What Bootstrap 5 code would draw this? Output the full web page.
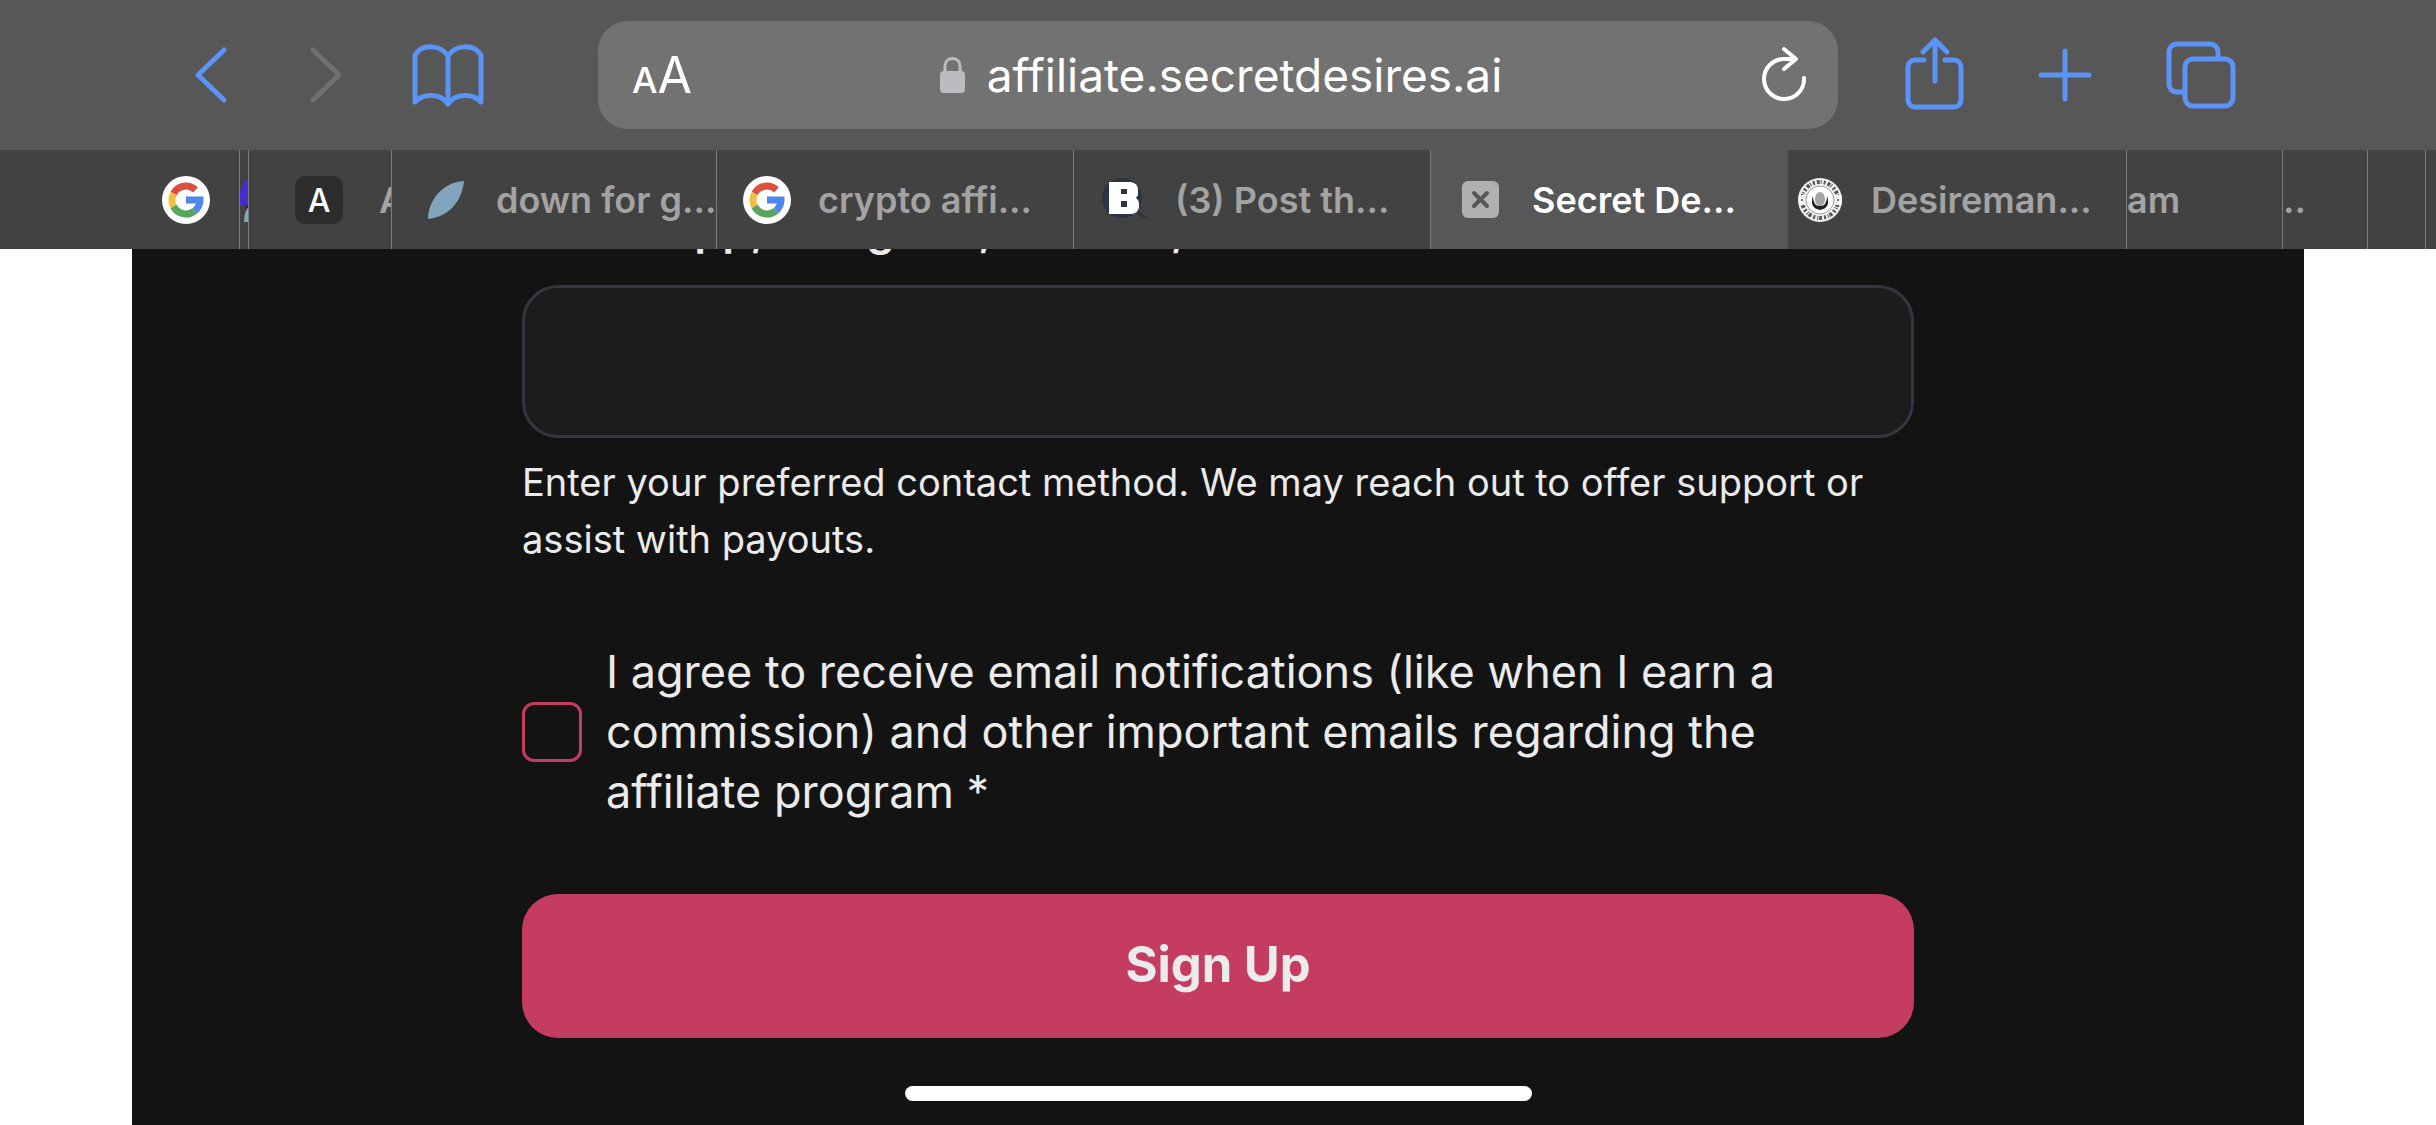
<!DOCTYPE html>
<html lang="en">
<head>
<meta charset="utf-8">
<meta name="viewport" content="width=device-width, initial-scale=1">
<title>Secret Desires Affiliate</title>
<link href="https://cdn.jsdelivr.net/npm/bootstrap@5.3.0/dist/css/bootstrap.min.css" rel="stylesheet">
<style>
  body { font-family: Inter, "Liberation Sans", sans-serif; background: #fff; color: #ebebeb; overflow: hidden; }
  .screen { min-height: 100vh; }
  .toolbar { background: #575757; height: 150px; padding: 0 200px 0 186px; }
  .tools-left { gap: 62px; }
  .tools-right { gap: 72px; }
  .tool { color: #5b93f7; border: 0; background: none; padding: 0; flex: none; }
  .tool svg, .fav { display: block; flex: none; }
  .tool.off { color: #707070; }
  .line-art { fill: none; stroke: currentColor; stroke-width: 5; stroke-linecap: round; stroke-linejoin: round; }
  .line-art.thin { stroke-width: 4; }
  .address { background: #727272; border-radius: 30px; height: 108px; margin: 0 66px 0 112px; padding: 0 30px 0 34px; min-width: 0; }
  .address .tool { color: #fff; }
  .address .place { gap: 22px; padding-right: 10px; }
  .url { font-size: 46px; line-height: 60px; color: #fff; }
  .aa { font-size: 50px; line-height: 60px; padding-top: 4px; }
  .aa .aa-small { font-size: 36px; font-weight: 500; }
  .tabs { background: #424242; height: 99px; }
  .tab { flex: 1 1 357px; border-right: 1px solid #7d7d7d; color: #a3a3a3; font-size: 36px; line-height: 44px; font-weight: 600; overflow: hidden; white-space: nowrap; text-decoration: none; gap: 27px; min-width: 0; padding-left: 26px; }
  .tab-first { flex-basis: 240px; justify-content: flex-end; padding: 0 29px 0 0; }
  .tab-sliver { flex-basis: 9px; padding: 0; }
  .tab-letter { flex-basis: 143px; padding-left: 46px; gap: 36px; }
  .tab-down { flex-basis: 325px; padding-left: 29px; }
  .tab-active { background: #575757; color: #fff; border: 0; padding-left: 31px; gap: 33px; }
  .tab-desire { flex-basis: 339px; padding-left: 9px; }
  .tab-am { flex-basis: 156px; padding: 0; }
  .tab-dots { flex-basis: 85px; padding: 0; }
  .tab-empty { flex-basis: 58px; padding: 0; }
  .tab-last { flex-basis: 10px; padding: 0; border: 0; }
  .page { background: #131313; margin: 0 132px; padding: 0 390px; overflow: hidden; }
  .field-name { font-size: 45px; line-height: 60px; font-weight: 600; margin: -50px 0 26px; }
  .page .form-control { height: 153px; border: 3px solid #333642; border-radius: 36px; background: #1c1c1c; color: #ebebeb; }
  .hint { font-size: 38px; line-height: 57px; color: #ebebeb; margin: 16px 0 0; }
  .agree { margin-top: 74px; gap: 24px; }
  .agree .form-check-input { width: 60px; height: 60px; border: 3px solid #c43d60; border-radius: 12px; background-color: transparent; margin: 0; flex: none; }
  .agree label { font-size: 45px; line-height: 60px; padding-right: 60px; }
  .btn-signup { --bs-btn-bg: #c43d60; --bs-btn-color: #ebebeb; --bs-btn-hover-bg: #b03455; --bs-btn-hover-color: #fff; height: 144px; border: 0; border-radius: 36px; font-size: 49px; font-weight: 700; margin-top: 72px; padding-bottom: 9px; }
  .home-bar { width: 627px; height: 15px; background: #fff; border-radius: 8px; margin: 48px auto 0; }
</style>
</head>
<body>
<svg width="0" height="0" class="position-absolute" aria-hidden="true">
  <symbol id="google" viewBox="0 0 48 48">
    <circle cx="24" cy="24" r="24" fill="#fff"/>
    <g fill="none" stroke-width="7">
      <path d="M33.500 13.900A14 14 0 0 0 11.600 17.500" stroke="#dc5040"/>
      <path d="M11.600 17.500a14 14 0 0 0 0 13" stroke="#f3bf42"/>
      <path d="M11.600 30.500A14 14 0 0 0 33 34.700" stroke="#58a55c"/>
      <path d="M33 34.700A14 14 0 0 0 38 24H24" stroke="#5087ec"/>
    </g>
  </symbol>
</svg>
<div class="screen d-flex flex-column">
  <header>
    <div class="toolbar d-flex align-items-center">
      <div class="tools-left d-flex align-items-center">
        <button class="tool" aria-label="Back"><svg width="50" height="60" viewBox="0 0 50 60"><path class="line-art" d="M38 5 12 30l26 25"/></svg></button>
        <button class="tool off" aria-label="Forward" disabled><svg width="50" height="60" viewBox="0 0 50 60"><path class="line-art" d="M15 5l26 25-26 25"/></svg></button>
        <button class="tool" aria-label="Bookmarks"><svg width="76" height="66" viewBox="0 0 76 66"><path class="line-art" d="M38 62V14C30 2 12 2 5 13v47c8-9 26-9 33 2 7-11 25-11 33-2V13C64 2 46 2 38 14"/></svg></button>
      </div>
      <div class="address d-flex align-items-center justify-content-between flex-fill">
        <button class="tool aa d-flex align-items-baseline" aria-label="Page settings"><span class="aa-small">A</span><span>A</span></button>
        <div class="place d-flex align-items-center">
          <svg width="25" height="38" viewBox="0 0 25 38"><rect y="15" width="25" height="22" rx="4" fill="#bcbbc1"/><path d="M5 17v-7C5 0 20 0 20 10v7" fill="none" stroke="#bcbbc1" stroke-width="3"/></svg>
          <a class="url text-decoration-none" href="#">affiliate.secretdesires.ai</a>
        </div>
        <button class="tool" aria-label="Reload"><svg width="48" height="58" viewBox="0 0 48 58"><path class="line-art thin" d="M44 32a20 20 0 1 1-20-19h11M24 3l12 10-12 10"/></svg></button>
      </div>
      <div class="tools-right d-flex align-items-center">
        <button class="tool" aria-label="Share"><svg width="62" height="76" viewBox="0 0 62 76"><path class="line-art" d="M20 23h-9a7 7 0 0 0-7 7v33a7 7 0 0 0 7 7h39a7 7 0 0 0 7-7V30a7 7 0 0 0-7-7h-9M31 44V4M19 15 31 3l12 12"/></svg></button>
        <button class="tool" aria-label="New tab"><svg width="56" height="56" viewBox="0 0 56 56"><path class="line-art" d="M27 4v48M3 28h48"/></svg></button>
        <button class="tool" aria-label="Show tabs"><svg width="70" height="68" viewBox="0 0 70 68"><path class="line-art" d="M17 51h-6a8 8 0 0 1-8-8V11a8 8 0 0 1 8-8h33a8 8 0 0 1 8 8v6"/><rect class="line-art" x="19" y="18" width="48" height="47" rx="8"/></svg></button>
      </div>
    </div>
    <nav class="tabs d-flex" aria-label="Open tabs">
      <a href="#" class="tab tab-first d-flex align-items-center" aria-label="Google"><svg class="fav" width="48" height="48"><use href="#google"/></svg></a>
      <a href="#" class="tab tab-sliver d-flex align-items-center" aria-label="Collapsed tab"><svg class="fav" width="9" height="48" viewBox="0 0 9 48"><path d="M5 3h4v34L5 30H0V16z" fill="#4a2bd0"/><path d="M4 28l5 9v-7z" fill="#35206f"/><path d="M9 30v16H4q0-10 5-16" fill="#7ab0ad"/></svg></a>
      <a href="#" class="tab tab-letter d-flex align-items-center"><svg class="fav" width="48" height="48" viewBox="0 0 48 48"><rect width="48" height="48" rx="10" fill="#2c2c2c"/><text x="24" y="36" text-anchor="middle" font-size="32" font-weight="500" fill="#fff">A</text></svg><span>A</span></a>
      <a href="#" class="tab tab-down d-flex align-items-center"><svg class="fav" width="48" height="48" viewBox="0 0 48 48"><path d="M43 5c-2 20-15 36-36 38C7 24 22 6 43 5z" fill="#82a4bc"/></svg><span>down for g...</span></a>
      <a href="#" class="tab d-flex align-items-center"><svg class="fav" width="48" height="48"><use href="#google"/></svg><span>crypto affi...</span></a>
      <a href="#" class="tab d-flex align-items-center"><svg class="fav" width="48" height="48" viewBox="0 0 48 48"><circle cx="22" cy="22" r="20" fill="#2b3344"/><path d="M36 34l9 8" stroke="#2b3344" stroke-width="3"/><path fill="#fff" fill-rule="evenodd" d="M9 6h22q7 1 7 8v5l-2 3q3 2 3 6v3q-1 7-8 7H9zM21 13v5h6v-5zm0 12v6h6v-6z"/></svg><span>(3) Post th...</span></a>
      <a href="#" class="tab tab-active d-flex align-items-center" aria-current="page"><svg class="fav" width="37" height="37" viewBox="0 0 37 37"><rect width="37" height="37" rx="6" fill="#b0b0b0"/><path d="M12 12l13 13M25 12 12 25" stroke="#575757" stroke-width="4" stroke-linecap="round"/></svg><span>Secret De...</span></a>
      <a href="#" class="tab tab-desire d-flex align-items-center"><svg class="fav" width="47" height="48" viewBox="0 0 47 48"><circle cx="23" cy="24" r="22" fill="#f4f4f4"/><circle cx="23" cy="24" r="18" fill="none" stroke="#555" stroke-width="4" stroke-dasharray="2 2 3 1 1 2"/><path d="M2 24h7M38 24h7" stroke="#f4f4f4" stroke-width="10"/><circle cx="5" cy="24" r="1" fill="#444"/><circle cx="41" cy="24" r="1" fill="#444"/><circle cx="23" cy="24" r="14" fill="#fff" stroke="#999"/><path d="M16 20q-4 12 7 14 11-2 7-14 0 10-7 10t-7-10" fill="#222"/><ellipse cx="23" cy="23" rx="5" ry="7" fill="#a5a5a5"/></svg><span>Desireman...</span></a>
      <a href="#" class="tab tab-am d-flex align-items-center"><span>am</span></a>
      <a href="#" class="tab tab-dots d-flex align-items-center"><span>..</span></a>
      <a href="#" class="tab tab-empty" aria-label="Collapsed tab"></a>
      <a href="#" class="tab tab-last" aria-label="Collapsed tab"></a>
    </nav>
  </header>
  <main class="page flex-fill">
    <form>
      <label class="field-name d-block" for="contact">WhatsApp, Telegram, Discord, etc. *</label>
      <input class="form-control" id="contact" type="text">
      <p class="hint">Enter your preferred contact method. We may reach out to offer support or assist with payouts.</p>
      <div class="agree d-flex align-items-center"><input class="form-check-input" type="checkbox" id="agree"><label for="agree">I agree to receive email notifications (like when I earn a commission) and other important emails regarding the affiliate program *</label></div>
      <button class="btn btn-signup w-100" type="submit">Sign Up</button>
    </form>
    <div class="home-bar"></div>
  </main>
</div>
<script src="https://cdn.jsdelivr.net/npm/bootstrap@5.3.0/dist/js/bootstrap.bundle.min.js"></script>
</body>
</html>
